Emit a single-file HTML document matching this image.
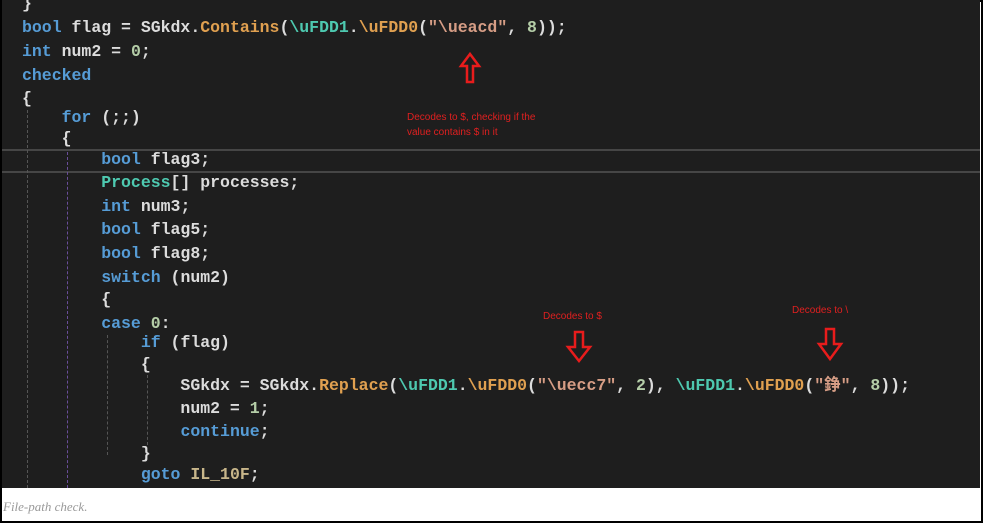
<!DOCTYPE html>
<html><head><meta charset="utf-8"><style>
body{margin:0;width:983px;height:523px;background:#fff;position:relative;overflow:hidden}
.frame{position:absolute;left:0;top:0;width:979px;height:519px;border:2px solid #000;background:#fff}
.code{position:absolute;left:2px;top:0;width:978px;height:488px;background:#1e1e1e;overflow:hidden}
.l{position:absolute;left:20px;height:24px;line-height:24px;font-family:"Liberation Mono","Noto Sans CJK SC",monospace;font-size:16.5px;color:#dcdcdc;white-space:pre;font-weight:bold;letter-spacing:0px}
.k{color:#569cd6}.t{color:#4ec9b0}.m{color:#e0a050}.s{color:#d69d85}.n{color:#b5cea8}.lb{color:#c8b68a}
.hl{position:absolute;left:0;width:978px;top:149px;height:20px;border-top:2px solid #464646;border-bottom:2px solid #464646}
.g{position:absolute;width:0;border-left:1px dashed #555}
.note{position:absolute;color:#e02020;font-family:"Liberation Sans",sans-serif;font-size:10px;line-height:15px}
.cap{position:absolute;left:3px;top:499px;font-family:"Liberation Serif",serif;font-style:italic;font-size:13px;color:#999}
</style></head><body>
<div class="frame"></div>
<div class="code">
<div class="hl"></div>
<div class="g" style="left:25px;top:110px;height:378px"></div>
<div class="g" style="left:65px;top:152px;height:336px;border-color:#6a4e9a"></div>
<div class="g" style="left:105px;top:335px;height:120px"></div>
<div class="g" style="left:145px;top:375px;height:70px"></div>
<div class="l" style="top:-8px">}</div>
<div class="l" style="top:16px"><span class="k">bool</span> flag = SGkdx.<span class="m">Contains</span>(<span class="t">\uFDD1</span>.<span class="m">\uFDD0</span>(<span class="s">"\ueacd"</span>, <span class="n">8</span>));</div>
<div class="l" style="top:40px"><span class="k">int</span> num2 = <span class="n">0</span>;</div>
<div class="l" style="top:64px"><span class="k">checked</span></div>
<div class="l" style="top:87px">{</div>
<div class="l" style="top:106px">    <span class="k">for</span> (;;)</div>
<div class="l" style="top:127px">    {</div>
<div class="l" style="top:148px">        <span class="k">bool</span> flag3;</div>
<div class="l" style="top:171px">        <span class="t">Process</span>[] processes;</div>
<div class="l" style="top:195px">        <span class="k">int</span> num3;</div>
<div class="l" style="top:218px">        <span class="k">bool</span> flag5;</div>
<div class="l" style="top:242px">        <span class="k">bool</span> flag8;</div>
<div class="l" style="top:266px">        <span class="k">switch</span> (num2)</div>
<div class="l" style="top:288px">        {</div>
<div class="l" style="top:312px">        <span class="k">case</span> <span class="n">0</span>:</div>
<div class="l" style="top:331px">            <span class="k">if</span> (flag)</div>
<div class="l" style="top:353px">            {</div>
<div class="l" style="top:374px">                SGkdx = SGkdx.<span class="m">Replace</span>(<span class="t">\uFDD1</span>.<span class="m">\uFDD0</span>(<span class="s">"\uecc7"</span>, <span class="n">2</span>), <span class="t">\uFDD1</span>.<span class="m">\uFDD0</span>(<span class="s">"錚"</span>, <span class="n">8</span>));</div>
<div class="l" style="top:397px">                num2 = <span class="n">1</span>;</div>
<div class="l" style="top:420px">                <span class="k">continue</span>;</div>
<div class="l" style="top:442px">            }</div>
<div class="l" style="top:463px">            <span class="k">goto</span> <span class="lb">IL_10F</span>;</div>
<svg style="position:absolute;left:0;top:0" width="978" height="488">
<g fill="none" stroke="#e81c1c" stroke-width="2.5" stroke-linejoin="miter">
<path d="M465 82 L465 66 L459 66 L468 54 L477 66 L471 66 L471 82 Z"/>
<path d="M573 332 L573 347 L566 347 L577 361 L588 347 L581 347 L581 332 Z"/>
<path d="M824 329 L824 344 L817 344 L828 359 L839 344 L832 344 L832 329 Z"/>
</g></svg>
<div class="note" style="left:405px;top:110px">Decodes to $, checking if the<br>value contains $ in it</div>
<div class="note" style="left:541px;top:309px">Decodes to $</div>
<div class="note" style="left:790px;top:303px">Decodes to \</div>
</div>
<div class="cap">File-path check.</div>
</body></html>
